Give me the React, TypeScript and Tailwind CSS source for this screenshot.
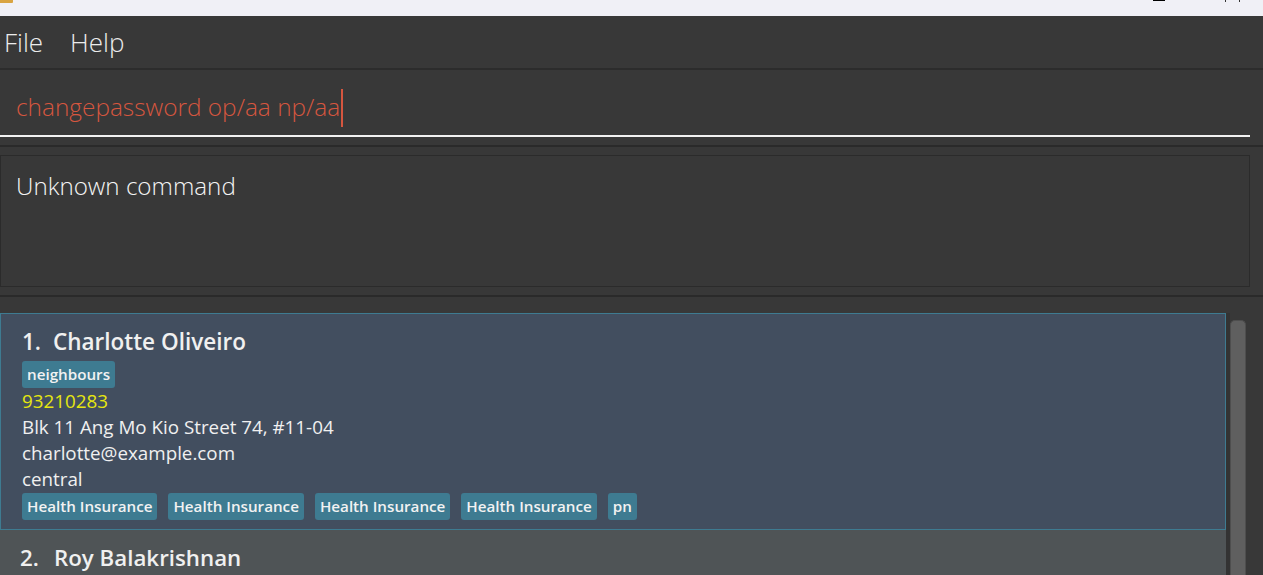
import React from "react";

const Tag = ({ children }: { children: React.ReactNode }) => (
  <span className="h-[27px] px-[5px] rounded-[3px] bg-[#3e7b91] text-[#f2f2f2] text-[15.2px] font-semibold leading-[27px] whitespace-nowrap">
    {children}
  </span>
);

export default function App() {
  return (
    <div
      className="w-[1263px] h-[575px] overflow-hidden bg-[#383838] flex flex-col"
      style={{ fontFamily: '"Open Sans", "Noto Sans", sans-serif' }}
    >
      {/* title bar remnant */}
      <div className="relative h-[16px] bg-[#f0f0f6] shrink-0">
        <div className="absolute left-0 top-0 w-[13px] h-[3px] bg-[#d9a441] rounded-br-[1px]" />
        <div className="absolute left-[1153px] top-0 w-[12px] h-[1px] bg-black" />
        <div className="absolute left-[1225px] top-0 w-[1px] h-[2px] bg-[#333]" />
        <div className="absolute left-[1239px] top-0 w-[1px] h-[2px] bg-[#333]" />
      </div>
      {/* menu */}
      <div className="h-[52px] shrink-0 flex items-center gap-[27px] pl-[4px] text-[26px] font-light text-[#ececec]">
        <span>File</span>
        <span>Help</span>
      </div>
      <div className="h-[2px] shrink-0 bg-[#2c2c2c]" />
      {/* command box */}
      <div className="h-[75px] shrink-0 flex flex-col">
        <div className="h-[65px] pl-[16px] pt-[15px] flex items-start">
          <span className="text-[24.4px] font-light text-[#d5563f] leading-[44px]">changepassword op/aa np/aa</span>
          <span className="w-[2px] h-[38px] bg-[#d5563f] mt-[4px] ml-[1px]" />
        </div>
        <div className="w-[1250px] h-[2px] bg-[#f2f2f2]" />
      </div>
      <div className="h-[2px] shrink-0 bg-[#2a2a2a]" />
      {/* result box */}
      <div className="pt-[8px] pb-[8px] shrink-0">
        <div className="w-[1250px] h-[132px] border border-[#2b2b2b] pl-[15px] pt-[14px] text-[24.2px] font-light text-[#f4f4f4] leading-[32px]">
          Unknown command
        </div>
      </div>
      <div className="h-[2px] shrink-0 bg-[#2a2a2a]" />
      {/* list */}
      <div className="flex-1 pt-[16px] flex">
        <div className="w-[1226px] flex flex-col">
          <div className="h-[217px] bg-[#424e5f] border border-[#3e7b91] pl-[21px] pt-[12px] text-[#f0f0f0]">
            <div className="text-[22.5px] font-semibold leading-[32px] flex">
              <span className="w-[31px]">1.</span>
              <span>Charlotte Oliveiro</span>
            </div>
            <div className="flex mt-[3px]">
              <Tag>neighbours</Tag>
            </div>
            <div className="text-[18.8px] leading-[26px] text-[#e6e60f]">93210283</div>
            <div className="text-[18.8px] leading-[26px]">Blk 11 Ang Mo Kio Street 74, #11-04</div>
            <div className="text-[18.8px] leading-[26px]">charlotte@example.com</div>
            <div className="text-[18.8px] leading-[26px]">central</div>
            <div className="flex gap-[11px] mt-[1px]">
              <Tag>Health Insurance</Tag>
              <Tag>Health Insurance</Tag>
              <Tag>Health Insurance</Tag>
              <Tag>Health Insurance</Tag>
              <Tag>pn</Tag>
            </div>
          </div>
          <div className="flex-1 bg-[#4f5456] pl-[20px] pt-[12px] text-[#f0f0f0]">
            <div className="text-[22.3px] font-semibold leading-[32px] flex">
              <span className="w-[34px]">2.</span>
              <span>Roy Balakrishnan</span>
            </div>
          </div>
        </div>
        <div className="w-[4px] bg-[#333333]" />
        <div className="pt-[7px] w-[16px]">
          <div className="h-full bg-[#5f5f5f] rounded-t-[5px] border-x border-t border-[#4e4e4e]" />
        </div>
      </div>
    </div>
  );
}
